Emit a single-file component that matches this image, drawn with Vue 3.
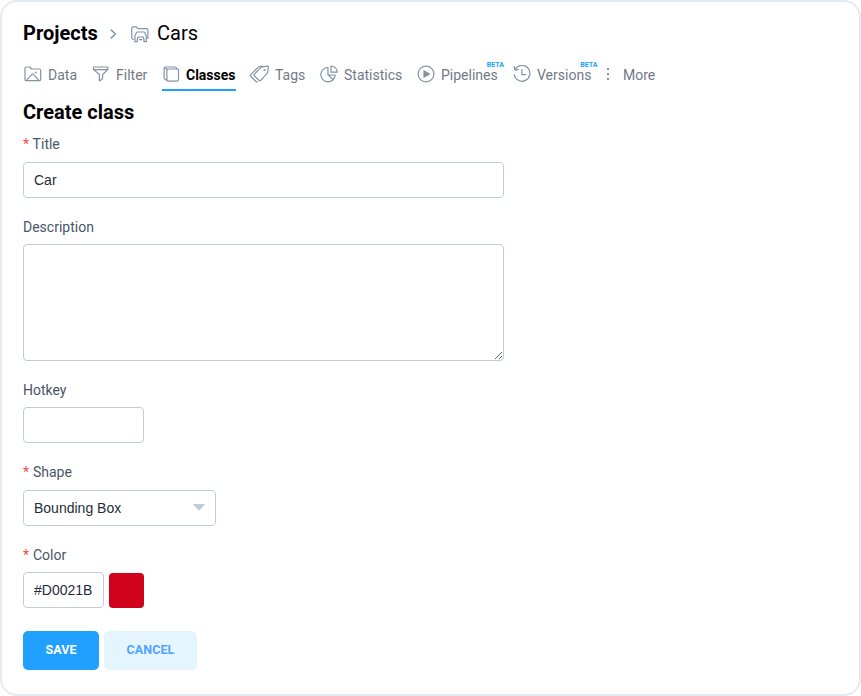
<script setup>
import { ref } from 'vue'

const title = ref('Car')
const description = ref('')
const hotkey = ref('')
const color = ref('#D0021B')
</script>

<template>
  <main class="panel">
    <header class="crumbs">
      <strong>Projects</strong>
      <svg class="chevron" width="8" height="10" viewBox="0 0 8 10"><path d="M1.2 1l4.2 4-4.2 4" /></svg>
      <svg class="folder" width="18" height="17" viewBox="0 0 18 17">
        <path d="M2.300 13.300A1.400 1.400 0 0 1 .8 11.900V2.100A1.400 1.400 0 0 1 2.200.8h3.300l1.600 1.800h8.300A1.500 1.500 0 0 1 16.900 4.100v8.500" />
        <path d="M3.900 15.700v-5.200q0-.8.400-1.500l1-2.200q.3-.8 1.100-.8h6.400q.8 0 1.100.8l1 2.200q.4.700.4 1.500v5.200H13v-2.100l-.7-2.600H7l-.7 2.600v2.100zM8.500 13.700h2.300" />
      </svg>
      <span>Cars</span>
    </header>

    <nav class="tabs">
      <a class="tab wide">
        <svg width="18" height="16" viewBox="0 0 18 16"><path d="M1 2.300Q1 1 2.300 1h3.400l1.700 2h7.900q1.400 0 1.400 1.400v8.900q0 1.400-1.400 1.400H2.300Q1 14.700 1 13.300zM3 13.700l5.100-5.600q.5-.5 1 0l5.200 5.600" /><circle class="solid" cx="11.800" cy="6.500" r=".9" /></svg>
        <span>Data</span>
      </a>
      <a class="tab">
        <svg width="18" height="16" viewBox="0 0 18 16"><path d="M1.700 1h13.600q.7 0 .6.700v1.200q0 .6-.5 1L10.600 8.500v4.300l-3.200 2.100V8.500L2 3.900q-.6-.4-.6-1V1.700q0-.7.600-.7M2 3.600h13.500" /></svg>
        <span>Filter</span>
      </a>
      <a class="tab active">
        <svg width="18" height="16" viewBox="0 0 18 16"><rect x="4.900" y="3" width="11.600" height="12.100" rx="1.700" /><path d="M4.900 14.300l-2-1.100Q2.100 12.700 2.100 11.800V2.600Q2.100 1 3.700 1h9.200q.8 0 1.300.6l1.100 1.400M2.600 1.500l2.600 2" /></svg>
        <span>Classes</span>
      </a>
      <a class="tab extra">
        <svg width="21" height="18" viewBox="0 0 21 18"><path d="M5.300 9.300l6.800-6.900q.4-.4 1-.5l5.300-.8q1.100-.1 1 .9l-.8 5.300q-.1.600-.5 1l-6.500 7q-.8.800-1.600 0l-4.700-4.500q-.8-.7 0-1.500zM8.300 16.900q-.7.200-1.300-.4l-5.400-5.200q-.8-.8 0-1.500l7.500-7.500q.6-.7 1.500-.8l1.900-.2" /><circle class="solid" cx="15.600" cy="5" r="1.100" /></svg>
        <span>Tags</span>
      </a>
      <a class="tab">
        <svg width="18" height="18" viewBox="0 0 18 18"><path d="M8 2.500A7.200 7.200 0 1 0 15.200 10H8zM11 1v6.200h6.200A6.200 6.200 0 0 0 11 1zM8.300 10l5 4.900" /></svg>
        <span>Statistics</span>
      </a>
      <a class="tab">
        <svg width="18" height="18" viewBox="0 0 18 18"><circle cx="9" cy="9" r="7.900" /><path class="solid" d="M6.400 5.600v6.800q0 .6.600.3l5.900-3.300q.5-.4 0-.8L7 5.300q-.6-.3-.6.300z" /></svg>
        <span>Pipelines</span><sup>BETA</sup>
      </a>
      <a class="tab">
        <svg width="18" height="18" viewBox="0 0 18 18"><path d="M2 4.700A7.900 7.900 0 1 1 1.200 9.500M1.200 1.700l.8 3.500 3.500-.7M8.900 4.600v5h3.900" /></svg>
        <span>Versions</span><sup>BETA</sup>
      </a>
      <span class="dots"><i /><i /><i /></span>
      <a class="more">More</a>
    </nav>

    <h1>Create class</h1>

    <form @submit.prevent>
      <label for="title" class="raised"><b>*</b> Title</label>
      <input id="title" v-model="title" class="field full">

      <label for="description">Description</label>
      <textarea id="description" v-model="description" class="field area" />

      <label for="hotkey">Hotkey</label>
      <input id="hotkey" v-model="hotkey" class="field hotkey">

      <label class="raised"><b>*</b> Shape</label>
      <div class="field select">
        <span>Bounding Box</span>
        <svg width="12" height="7" viewBox="0 0 12 7"><path d="M.8 0h10.400q1.100 0 .4.900L6.700 6.100q-.7.700-1.400 0L.4.900Q-.3 0 .8 0z" /></svg>
      </div>

      <label for="color"><b>*</b> Color</label>
      <div class="color-row">
        <input id="color" v-model="color" class="field hex">
        <span class="swatch" :style="{ background: color }" />
      </div>

      <div class="actions">
        <button class="save">SAVE</button>
        <button class="cancel" type="button">CANCEL</button>
      </div>
    </form>
  </main>
</template>

<style>
body { background: #fff; }
</style>

<style scoped>
* { box-sizing: border-box; }
.panel {
  width: 861px;
  height: 696px;
  padding: 18px 21px 0;
  border: 2px solid #e6ebef;
  border-radius: 17px;
  background: #fff;
  font-family: Roboto, sans-serif;
  color: #000;
  overflow: hidden;
}
svg { fill: none; stroke: #8492a6; stroke-width: 1.2; stroke-linejoin: round; stroke-linecap: round; flex: none; }
.solid { fill: #8492a6; stroke: none; }
.crumbs { display: flex; align-items: center; height: 26px; font-size: 20px; line-height: 26px; }
.crumbs strong { width: 75px; font-weight: 700; }
.chevron { margin: 1px 14px 0 12px; stroke-width: 1.6; }
.folder { margin: 2px 8px 0 -1px; }
.tabs {
  display: grid;
  grid-template-columns: 69px 70px 87px 71px 97px 96px 92px 18px auto;
  height: 45px;
  font-size: 14px;
  line-height: 20px;
  color: #727986;
}
.tab { display: grid; grid-template-columns: 24px auto 1fr; align-items: center; height: 45px; padding-top: 11px; white-space: nowrap; }
.tab.wide { grid-template-columns: 25px auto 1fr; }
.tab.wide svg { margin-left: 1px; }
.tab.extra { grid-template-columns: 26px auto 1fr; }
.tab svg { margin-top: -.5px; }
.tab span { padding-top: 1px; line-height: 14px; }
.tab.active { width: 74px; border-bottom: 2px solid #20a0ff; padding-top: 13px; font-weight: 700; color: #000; }
.tab sup { align-self: start; margin: 5px 0 0 -11px; font-size: 7px; line-height: 7px; font-weight: 700; color: #20a0ff; }
.dots { display: flex; flex-direction: column; align-items: flex-start; justify-content: center; gap: 3px; padding: 11px 0 0 2px; }
.dots i { width: 2px; height: 2px; background: #8a919d; }
.more { padding-top: 19px; }
h1 { height: 27px; margin: 8px 0 9px; font-size: 20px; line-height: 27px; font-weight: 700; }
form { display: flex; flex-direction: column; align-items: flex-start; }
label { display: block; height: 20px; margin-bottom: 7px; font-size: 14px; line-height: 20px; color: #475669; }
label.raised { line-height: 18px; }
label b { margin-right: .4px; color: #ff4949; font-weight: 400; }
.field {
  height: 36px;
  margin: 0 0 19px;
  padding: 0 10px;
  border: 1px solid #c0ccda;
  border-radius: 4px;
  background: #fff;
  font: 14px/20px "Liberation Sans", sans-serif;
  color: #1f2d3d;
  outline: none;
}
.full { width: 481px; }
input.full { padding-bottom: 1px; }
.area { width: 481px; height: 117px; resize: both; }
.hotkey { width: 121px; margin-bottom: 20px; }
.select { display: flex; align-items: center; justify-content: space-between; width: 193px; padding-bottom: 1px; }
.select svg { fill: #c0ccda; stroke: none; }
.color-row { display: flex; gap: 5px; }
.hex { width: 81px; }
.swatch { width: 35.500px; height: 35px; margin: .5px 0 0 -.5px; border-radius: 4px; }
.actions { display: flex; gap: 5px; margin-top: 3.500px; }
button { height: 39px; padding: 0 0 1px; border: 0; border-radius: 5px; font: 700 12.500px/38px Roboto, sans-serif; letter-spacing: .1px; }
.save { width: 76px; background: #20a0ff; color: #fff; }
.cancel { width: 93px; background: #e5f5ff; color: #50a3ff; }
</style>
